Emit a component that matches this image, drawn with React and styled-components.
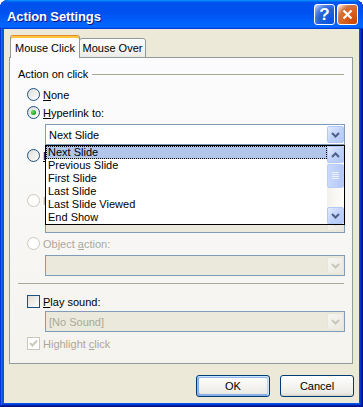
import React from "react";
import styled, { createGlobalStyle } from "styled-components";

const GlobalStyle = createGlobalStyle`
  html, body { margin: 0; padding: 0; background: #fff; }
  body { font-family: "Liberation Sans", Arial, sans-serif; font-size: 11px; color: #000; }
  * { box-sizing: border-box; }
`;

const Window = styled.div`
  position: relative;
  width: 363px;
  height: 407px;
  display: flex;
  flex-direction: column;
  background: #0054e3;
  border-radius: 8px 8px 0 0;
  padding: 0 4px 4px;
  box-shadow: inset -1px -1px #00138c, inset 1px 1px #0831d9, inset -2px -2px #001ea0,
    inset 2px 2px #166aee, inset -3px -3px #003bda, inset 3px 3px #0855dd;
  overflow: hidden;
`;

const TitleBar = styled.div`
  height: 29px;
  margin: 0 -4px;
  padding: 0 5px 0 7px;
  display: flex;
  align-items: center;
  border-radius: 8px 8px 0 0;
  background: linear-gradient(180deg, #0997ff, #0053ee 8%, #0050ee 40%, #0066ff 88%, #0066ff 93%, #005bff 95%, #003dd7 96%, #003dd7);
`;

const Title = styled.div`
  flex: 1;
  color: #fff;
  font-weight: bold;
  font-size: 13px;
  letter-spacing: -0.1px;
  text-shadow: 1px 1px #0f1089;
  padding-top: 3px;
`;

const TitleButton = styled.div`
  width: 21px;
  height: 21px;
  border: 1px solid #fff;
  border-radius: 3px;
  margin-left: 2px;
  display: flex;
  align-items: center;
  justify-content: center;
  color: #fff;
  font-weight: bold;
  font-size: 17px;
  font-family: "Liberation Sans", sans-serif;
  background: ${(p) =>
    p.$variant === "close"
      ? "radial-gradient(circle at 90% 90%, #cc4600 0, #dc6527 55%, #cd7546 70%, #ffccb2 90%, #fff 100%)"
      : "radial-gradient(circle at 90% 90%, #0054e9 0, #2263d5 55%, #4479e4 70%, #a3bbec 90%, #fff 100%)"};
`;

const Body = styled.div`
  flex: 1;
  background: #ece9d8;
  display: flex;
  flex-direction: column;
  padding: 6px 0 6px 0;
`;

const TabRow = styled.div`
  display: flex;
  align-items: flex-end;
  margin: 0 0 -1px 6px;
  position: relative;
  z-index: 1;
`;

const Tab = styled.div`
  width: ${(p) => p.$w}px;
  height: ${(p) => (p.$active ? 23 : 20)}px;
  display: flex;
  align-items: center;
  justify-content: center;
  border: 1px solid #919b9c;
  border-radius: 3px 3px 0 0;
  ${(p) =>
    p.$active
      ? `
    background: #fcfcfe;
    border-bottom: none;
    border-top: 1px solid #e68b2c;
    box-shadow: inset 0 2px #ffc73c;
    padding-top: 2px;
  `
      : `
    margin-left: -1px;
    background: linear-gradient(180deg, #fff, #ecebe6);
  `}
`;

const Panel = styled.div`
  margin: 0 6px 0 5px;
  height: 307px;
  border: 1px solid #919b9c;
  background: linear-gradient(180deg, #fcfcfe, #f4f3ee);
  display: flex;
  flex-direction: column;
  padding: 9px 0 0;
`;

const GroupHeader = styled.div`
  display: flex;
  align-items: center;
  margin: 0 8px;
  height: 13px;
  gap: 4px;
`;

const Line = styled.div`
  flex: 1;
  height: 1px;
  background: #aca899;
  margin-top: 1px;
`;

const OptionRow = styled.div`
  display: flex;
  align-items: center;
  height: 13px;
  margin: ${(p) => p.$mt}px 0 0 17px;
  gap: 3px;
  color: ${(p) => (p.$disabled ? "#aca899" : "#000")};
`;

const RadioCircle = styled.span`
  width: 13px;
  height: 13px;
  border-radius: 50%;
  flex: none;
  display: flex;
  align-items: center;
  justify-content: center;
  border: 1px solid ${(p) => (p.$disabled ? "#cac8bb" : "#1c5180")};
  background: ${(p) => (p.$disabled ? "#fff" : "linear-gradient(135deg, #dcdcd7, #fff)")};
`;

const RadioDot = styled.span`
  width: 5px;
  height: 5px;
  border-radius: 50%;
  background: radial-gradient(circle at 35% 35%, #6ee46a, #21a121 65%, #1a8c1a);
`;

const CheckBox = styled.span`
  width: 13px;
  height: 13px;
  flex: none;
  display: flex;
  align-items: center;
  justify-content: center;
  border: 1px solid ${(p) => (p.$disabled ? "#cac8bb" : "#1c5180")};
  background: ${(p) => (p.$disabled ? "#fff" : "linear-gradient(135deg, #dcdcd7, #fff)")};
`;

const Key = styled.span`
  text-decoration: underline;
`;

const ComboWrap = styled.div`
  position: relative;
  margin: ${(p) => p.$mt}px 7px 0 35px;
`;

const Combo = styled.div`
  height: 21px;
  border: 1px solid #7f9db9;
  background: ${(p) => (p.$disabled ? "#ebe9db" : "#fff")};
  display: flex;
  align-items: center;
  padding: 1px 0;
  color: ${(p) => (p.$disabled ? "#aca899" : "#000")};
`;

const ComboText = styled.span`
  flex: 1;
  padding-left: 3px;
`;

const ArrowButton = styled.span`
  width: 17px;
  height: 17px;
  flex: none;
  display: flex;
  align-items: center;
  justify-content: center;
  border-radius: 2px;
  border: 1px solid ${(p) => (p.$disabled ? "#e8e6dc" : "#b3c9f5")};
  background: ${(p) =>
    p.$disabled
      ? "linear-gradient(135deg, #f7f6f1, #eae8df)"
      : "linear-gradient(135deg, #e4ecfe, #c1d3fb 50%, #b4c8f6)"};
`;

const EditRow = styled.div`
  display: flex;
  gap: 6px;
  margin: 5px 7px 0 35px;
`;

const Edit = styled.div`
  flex: 1;
  height: 21px;
  border: 1px solid #7f9db9;
  background: #fff;
`;

const SmallButton = styled.div`
  width: 75px;
  height: 21px;
  border: 1px solid #003c74;
  border-radius: 3px;
  background: linear-gradient(180deg, #fff, #ecebe6 86%, #d6d0c5);
  display: flex;
  align-items: center;
  justify-content: center;
`;

const Separator = styled.div`
  height: 1px;
  background: #aca899;
  margin: 7px 8px 0;
`;

const Popup = styled.div`
  position: absolute;
  top: 100%;
  left: 0;
  right: 0;
  height: 80px;
  border: 1px solid #000;
  background: #fff;
  display: flex;
  z-index: 5;
`;

const ItemList = styled.div`
  flex: 1;
  display: flex;
  flex-direction: column;
`;

const Item = styled.div`
  height: 13px;
  line-height: 11px;
  padding-left: 1px;
  border: 1px ${(p) => (p.$selected ? "dotted #000" : "solid transparent")};
  background: ${(p) => (p.$selected ? "#b2c5eb" : "transparent")};
`;

const Scrollbar = styled.div`
  width: 17px;
  display: flex;
  flex-direction: column;
  background: linear-gradient(90deg, #f3f1ec, #fefefb);
`;

const Track = styled.div`
  flex: 1;
`;

const Thumb = styled.div`
  height: 24px;
  margin-top: 1px;
  border: 1px solid #b8cdf8;
  border-radius: 2px;
  background: linear-gradient(90deg, #c9d8fc, #bed0fb 50%, #b4c8f6);
  display: flex;
  align-items: center;
  justify-content: center;
`;

const ButtonRow = styled.div`
  display: flex;
  justify-content: flex-end;
  gap: 10px;
  margin-top: 11px;
  padding-right: 5px;
`;

const DialogButton = styled.div`
  width: 74px;
  height: 22px;
  border: 1px solid #003c74;
  border-radius: 3px;
  display: flex;
  align-items: center;
  justify-content: center;
  background: linear-gradient(180deg, #fff, #ecebe6 86%, #d6d0c5);
  ${(p) =>
    p.$default &&
    `box-shadow: inset -1px 1px #cee7ff, inset 1px 2px #98b8ea, inset -2px 2px #bcd4f6, inset 1px -1px #89ade4, inset 2px -2px #89ade4;`}
`;

const Watermark = styled.div`
  position: absolute;
  left: 72px;
  top: 146px;
  font-size: 42px;
  color: rgba(0, 0, 0, 0.022);
  pointer-events: none;
  white-space: nowrap;
  z-index: 10;
`;

const Chevron = ({ dir = "down", color = "#4d6185" }) => (
  <svg width="9" height="6" viewBox="0 0 9 6">
    <path
      d={dir === "down" ? "M1 1 L4.5 4.5 L8 1" : "M1 5 L4.5 1.5 L8 5"}
      fill="none"
      stroke={color}
      strokeWidth="2"
    />
  </svg>
);

const Radio = ({ checked, disabled }) => (
  <RadioCircle $disabled={disabled}>{checked && <RadioDot />}</RadioCircle>
);

const Check = ({ checked, disabled }) => (
  <CheckBox $disabled={disabled}>
    {checked && (
      <svg width="9" height="9" viewBox="0 0 9 9">
        <path d="M1 4 L3.5 6.5 L8 1.5" fill="none" stroke={disabled ? "#cac8bb" : "#21a121"} strokeWidth="2" />
      </svg>
    )}
  </CheckBox>
);

const DropDown = ({ text, disabled, mt, children }) => (
  <ComboWrap $mt={mt}>
    <Combo $disabled={disabled}>
      <ComboText>{text}</ComboText>
      <ArrowButton $disabled={disabled}>
        <Chevron color={disabled ? "#c9c7ba" : "#4d6185"} />
      </ArrowButton>
    </Combo>
    {children}
  </ComboWrap>
);

const items = ["Next Slide", "Previous Slide", "First Slide", "Last Slide", "Last Slide Viewed", "End Show"];

export default function App() {
  return (
    <>
      <GlobalStyle />
      <Window>
        <TitleBar>
          <Title>Action Settings</Title>
          <TitleButton $variant="help">?</TitleButton>
          <TitleButton $variant="close">
            <svg width="11" height="11" viewBox="0 0 11 11">
              <path d="M1.5 1.5 L9.5 9.5 M9.5 1.5 L1.5 9.5" stroke="#fff" strokeWidth="2.2" />
            </svg>
          </TitleButton>
        </TitleBar>
        <Body>
          <TabRow>
            <Tab $active $w={70}>Mouse Click</Tab>
            <Tab $w={67}>Mouse Over</Tab>
          </TabRow>
          <Panel>
            <GroupHeader>
              <span>Action on click</span>
              <Line />
            </GroupHeader>
            <OptionRow $mt={8}>
              <Radio />
              <span>
                <Key>N</Key>one
              </span>
            </OptionRow>
            <OptionRow $mt={5}>
              <Radio checked />
              <span>
                <Key>H</Key>yperlink to:
              </span>
            </OptionRow>
            <DropDown text="Next Slide" mt={5}>
              <Popup>
                <ItemList>
                  {items.map((it, i) => (
                    <Item key={it} $selected={i === 0}>
                      {it}
                    </Item>
                  ))}
                </ItemList>
                <Scrollbar>
                  <ArrowButton>
                    <Chevron dir="up" />
                  </ArrowButton>
                  <Track>
                    <Thumb>
                      <svg width="7" height="8" viewBox="0 0 7 8">
                        <path d="M0 0.5H7M0 2.5H7M0 4.5H7M0 6.5H7" stroke="#eef4fe" strokeWidth="1" />
                      </svg>
                    </Thumb>
                  </Track>
                  <ArrowButton>
                    <Chevron />
                  </ArrowButton>
                </Scrollbar>
              </Popup>
            </DropDown>
            <OptionRow $mt={4}>
              <Radio />
              <span>
                <Key>R</Key>un program:
              </span>
            </OptionRow>
            <EditRow>
              <Edit />
              <SmallButton>Browse...</SmallButton>
            </EditRow>
            <OptionRow $mt={6} $disabled>
              <Radio disabled />
              <span>Run macro:</span>
            </OptionRow>
            <DropDown text="" disabled mt={5} />
            <OptionRow $mt={4} $disabled>
              <Radio disabled />
              <span>
                Object <Key>a</Key>ction:
              </span>
            </OptionRow>
            <DropDown text="" disabled mt={5} />
            <Separator />
            <OptionRow $mt={11}>
              <Check />
              <span>
                <Key>P</Key>lay sound:
              </span>
            </OptionRow>
            <DropDown text="[No Sound]" disabled mt={3} />
            <OptionRow $mt={5} $disabled>
              <Check checked disabled />
              <span>
                Highlight <Key>c</Key>lick
              </span>
            </OptionRow>
          </Panel>
          <ButtonRow>
            <DialogButton $default>OK</DialogButton>
            <DialogButton>Cancel</DialogButton>
          </ButtonRow>
        </Body>
        <Watermark>www.java2s.com</Watermark>
      </Window>
    </>
  );
}
